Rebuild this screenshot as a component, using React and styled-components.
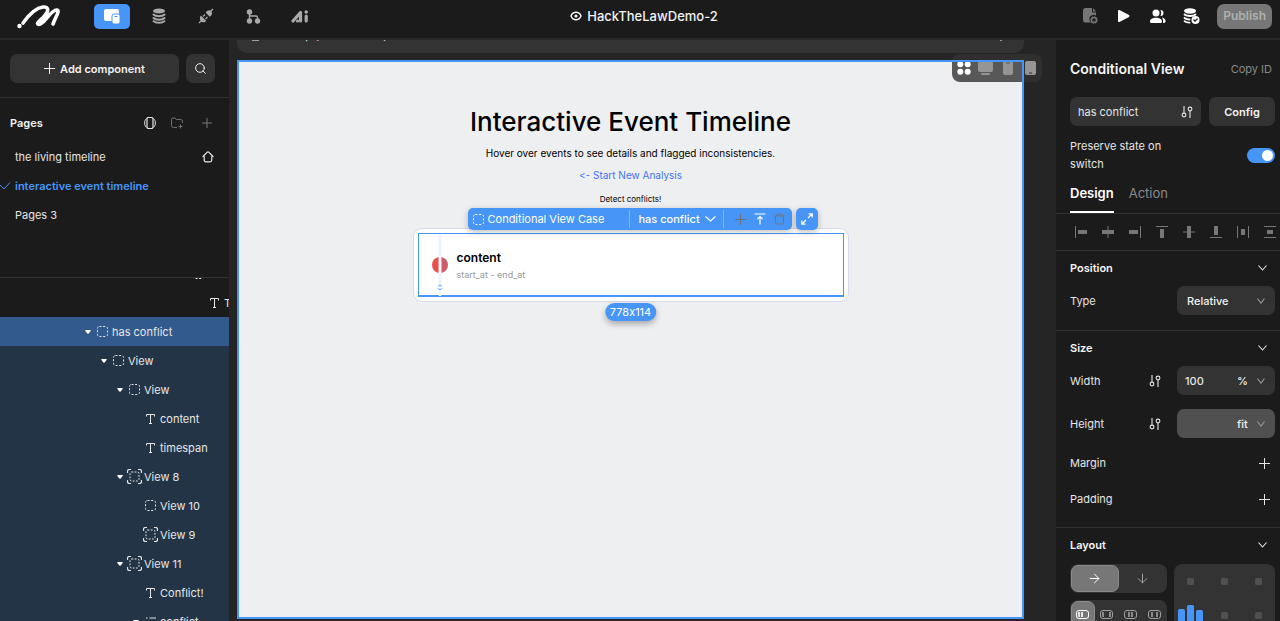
import React, { useLayoutEffect, useRef, useState } from 'react';
import styled, { createGlobalStyle } from 'styled-components';
import { FiPlus, FiSearch, FiArrowRight, FiArrowDown } from 'react-icons/fi';

const GlobalStyle = createGlobalStyle`
  * {
    box-sizing: border-box;
  }
  body {
    margin: 0;
    background: #1b1b1b;
    color: #e6e6e6;
    font-family: Inter, 'Liberation Sans', sans-serif;
    font-size: 11px;
    line-height: 18px;
    font-variant-ligatures: none;
    font-feature-settings: 'calt' 0;
  }
  button, input, select {
    font: inherit;
    color: inherit;
    border: 0;
    padding: 0;
    background: none;
    outline: none;
    appearance: none;
  }
  button {
    cursor: pointer;
  }
  svg {
    display: block;
    flex-shrink: 0;
  }
`;

const Page = styled.div`
  display: flex;
  flex-direction: column;
  height: 100vh;
  overflow: hidden;
`;

const TopBar = styled.header`
  display: flex;
  align-items: center;
  justify-content: space-between;
  flex-shrink: 0;
  height: 40px;
  padding: 0 8px 6px 16px;
  border-bottom: 2px solid #282828;
`;

const TopGroup = styled.nav`
  display: flex;
  align-items: center;
  flex: 1;
  gap: ${({ $gap }) => $gap || 0}px;
  justify-content: ${({ $end }) => ($end ? 'flex-end' : 'flex-start')};
`;

const Logo = styled.a`
  display: block;
  margin-right: 32px;
`;

const ToolButton = styled.button`
  display: flex;
  align-items: center;
  justify-content: center;
  width: 36px;
  height: 25px;
  margin-right: 11px;
  border-radius: 5px;
  color: ${({ $active }) => ($active ? '#fff' : '#a9a9a9')};
  background: ${({ $active }) => ($active ? '#4796f7' : 'transparent')};
`;

const ProjectName = styled.h1`
  display: flex;
  align-items: center;
  gap: 5px;
  margin: 0;
  color: #f2f2f2;
  font-size: 13px;
  font-weight: 500;
`;

const IconButton = styled.button`
  display: flex;
  align-items: center;
  justify-content: center;
  color: ${({ $color }) => $color || '#e6e6e6'};
`;

const PublishButton = styled.button`
  height: 25px;
  padding: 0 6px;
  border-radius: 7px;
  background: #777;
  color: #b0b0b0;
  font-size: 12px;
  font-weight: 600;
`;

const Body = styled.div`
  display: flex;
  flex: 1;
  min-height: 0;
`;

const Sidebar = styled.aside`
  display: flex;
  flex-direction: column;
  width: 229px;
  flex-shrink: 0;
`;

const AddRow = styled.div`
  display: flex;
  gap: 7px;
  padding: 14px 14px 14px 10px;
  border-bottom: 1px solid #303030;
`;

const GreyButton = styled.button`
  display: flex;
  align-items: center;
  justify-content: center;
  gap: 5px;
  height: 29px;
  flex: ${({ $grow }) => ($grow ? 1 : 'none')};
  width: ${({ $width }) => ($width ? `${$width}px` : 'auto')};
  border-radius: 7px;
  background: #333;
  color: #f2f2f2;
  font-weight: 600;
`;

const PagesPanel = styled.section`
  height: 180px;
  flex-shrink: 0;
  padding-top: 10px;
  border-bottom: 1px solid #333;
`;

const PagesHeader = styled.div`
  display: flex;
  align-items: center;
  gap: 15px;
  height: 29px;
  padding: 0 14px 0 10px;
  margin-bottom: 5px;
`;

const PagesTitle = styled.h2`
  flex: 1;
  margin: 0;
  color: #f2f2f2;
  font-size: 11px;
  font-weight: 600;
`;

const PageItem = styled.button`
  display: flex;
  align-items: center;
  justify-content: space-between;
  width: 100%;
  height: 29px;
  padding: 0 15px 0 0;
  text-align: left;
  color: ${({ $active }) => ($active ? '#4796f7' : '#e6e6e6')};
  font-weight: ${({ $active }) => ($active ? 600 : 400)};
`;

const PageLabel = styled.span`
  display: flex;
  align-items: center;
  flex: 1;
`;

const PageMark = styled.span`
  width: 15px;
`;

const Tree = styled.ul`
  flex: 1;
  min-height: 0;
  margin: 0;
  padding: 0;
  overflow: hidden;
  list-style: none;
`;

const TreeRow = styled.li`
  display: flex;
  align-items: center;
  height: 29px;
  padding-left: ${({ $depth }) => $depth * 16 + 5}px;
  overflow: hidden;
  white-space: nowrap;
  background: ${({ $state }) =>
    $state === 'selected' ? '#325a8c' : $state === 'inside' ? '#233446' : 'transparent'};
`;

const TreeArrow = styled.span`
  width: 9px;
  flex-shrink: 0;
`;

const TreeIcon = styled.span`
  display: flex;
  justify-content: center;
  width: 17px;
  flex-shrink: 0;
  margin-right: 1px;
`;

const Canvas = styled.main`
  position: relative;
  display: flex;
  flex-direction: column;
  flex: 1;
  min-width: 0;
  padding: 0 32px 2px 8px;
  background: #252525;
`;

const FrameBar = styled.div`
  height: 13px;
  flex-shrink: 0;
  overflow: hidden;
  border-radius: 0 0 10px 10px;
  background: #333;
`;

const FrameBarRow = styled.div`
  display: flex;
  align-items: center;
  gap: 9px;
  height: 33px;
  padding: 0 22px 4px 14px;
`;

const FrameName = styled.span`
  flex: 1;
`;

const Artboard = styled.div`
  position: relative;
  display: flex;
  flex-direction: column;
  align-items: center;
  flex: 1;
  margin-top: 7px;
  padding-top: 44px;
  background: #eeeff1;
  color: #000;
  &::after {
    content: '';
    position: absolute;
    inset: 0;
    border: 2px solid #4796f7;
    pointer-events: none;
  }
`;

const DeviceBar = styled.div`
  position: absolute;
  top: -6px;
  right: -18px;
  display: flex;
  align-items: center;
  gap: 7px;
  height: 28px;
  padding: 0 5px;
  border-radius: 8px;
  background: rgba(50, 50, 50, 0.8);
  color: #959595;
`;

const Title = styled.h2`
  margin: 0;
  font-size: 26px;
  font-weight: 500;
  line-height: 36px;
`;

const Subtitle = styled.p`
  margin: 4px 0;
  font-size: 10px;
`;

const BackLink = styled.a`
  color: #3e74f4;
  font-size: 10px;
  text-decoration: none;
`;

const Hint = styled.p`
  margin: 6px 0 20px;
  font-size: 8px;
`;

const Card = styled.div`
  position: relative;
  width: 56%;
  max-width: 436px;
  padding: 4px;
  border: 1px solid #d9d9ea;
  border-radius: 9px;
  background: #fff;
`;

const CaseView = styled.div`
  position: relative;
  display: flex;
  align-items: center;
  gap: 9px;
  height: 64px;
  padding-left: 13px;
  border: 1px solid #4796f7;
  border-bottom-width: 2px;
`;

const EventText = styled.div`
  display: flex;
  flex-direction: column;
  gap: 1px;
  padding-top: 3px;
`;

const EventTitle = styled.strong`
  font-size: 12px;
  font-weight: 600;
  line-height: 16px;
`;

const EventTime = styled.span`
  color: #999;
  font-size: 9px;
  line-height: 16px;
`;

const SelectionTools = styled.div`
  position: absolute;
  top: -21px;
  left: 54px;
  display: flex;
  gap: 4px;
  color: #fff;
  white-space: nowrap;
`;

const BlueBox = styled.div`
  display: flex;
  align-items: center;
  height: 22px;
  border-radius: 5px;
  background: #4796f7;
  box-shadow: 0 2px 6px rgba(0, 0, 0, 0.25);
`;

const BlueSegment = styled.div`
  display: flex;
  align-items: center;
  gap: ${({ $gap }) => $gap}px;
  width: ${({ $width }) => $width}px;
  height: 18px;
  padding-left: ${({ $pad }) => $pad}px;
  border-left: ${({ $divided }) => ($divided ? '1px solid #7fb6fa' : '0')};
`;

const CaseButton = styled.button`
  display: flex;
  align-items: center;
  gap: 5px;
  font-weight: 500;
`;

const ExpandButton = styled.button`
  display: flex;
  align-items: center;
  justify-content: center;
  width: 22px;
  height: 22px;
  border-radius: 5px;
  background: #4796f7;
  box-shadow: 0 2px 6px rgba(0, 0, 0, 0.25);
`;

const SizeBadge = styled.span`
  position: absolute;
  top: 100%;
  left: 50%;
  margin-top: 2px;
  padding: 0 5px;
  transform: translateX(-50%);
  border-radius: 9px;
  background: #4796f7;
  box-shadow: 0 3px 6px rgba(0, 0, 0, 0.3);
  color: #fff;
`;

const Inspector = styled.aside`
  width: 224px;
  flex-shrink: 0;
  overflow: hidden;
`;

const InspectorHead = styled.div`
  padding: 18px 5px 0 14px;
`;

const HeadRow = styled.div`
  display: flex;
  align-items: center;
  justify-content: space-between;
  gap: 8px;
  margin-bottom: ${({ $below }) => $below || 0}px;
`;

const InspectorTitle = styled.h2`
  margin: 0;
  color: #f5f5f5;
  font-size: 14px;
  font-weight: 600;
  line-height: 21px;
`;

const CopyButton = styled.button`
  padding-right: 3px;
  color: #8a8a8a;
`;

const Field = styled.div`
  display: flex;
  align-items: center;
  flex: ${({ $grow }) => ($grow ? 1 : 'none')};
  width: ${({ $grow }) => ($grow ? 'auto' : '98px')};
  min-width: 0;
  height: 29px;
  padding: 0 ${({ $grow }) => ($grow ? 8 : 10)}px 0 8px;
  border-radius: 7px;
  background: ${({ $light }) => ($light ? '#505050' : '#333')};
`;

const TextInput = styled.input`
  flex: 1;
  width: 100%;
  min-width: 0;
  font-weight: ${({ $strong }) => ($strong ? 500 : 400)};
`;

const Select = styled.select`
  flex: ${({ $grow }) => ($grow ? 1 : 'none')};
  margin-right: 9px;
  padding-left: ${({ $grow }) => ($grow ? 2 : 0)}px;
  color: #f2f2f2;
  font-weight: 500;
`;

const SwitchLabel = styled.label`
  display: flex;
  align-items: center;
  justify-content: space-between;
  height: 36px;
`;

const SwitchText = styled.span`
  width: 110px;
`;

const Switch = styled.input.attrs({ type: 'checkbox', role: 'switch' })`
  width: 28px;
  height: 15px;
  margin: 0;
  padding: 2px;
  border-radius: 8px;
  background: ${({ checked }) => (checked ? '#4796f7' : '#555')};
  &::before {
    content: '';
    display: block;
    width: 11px;
    height: 11px;
    margin-left: ${({ checked }) => (checked ? '13px' : '0')};
    border-radius: 50%;
    background: #fff;
  }
`;

const Tabs = styled.div`
  display: flex;
  gap: 15px;
  padding: 6px 14px 0;
  border-bottom: 1px solid #333;
`;

const Tab = styled.button`
  height: 34px;
  padding-bottom: 4px;
  border-bottom: 2px solid ${({ $active }) => ($active ? '#fff' : 'transparent')};
  color: ${({ $active }) => ($active ? '#fff' : '#8a8a8a')};
  font-size: 13px;
  font-weight: ${({ $active }) => ($active ? 600 : 400)};
`;

const AlignRow = styled.div`
  display: flex;
  align-items: center;
  justify-content: space-between;
  height: 37px;
  padding: 0 4px 0 19px;
  border-bottom: 1px solid #333;
`;

const Section = styled.section`
  padding: 6px 5px ${({ $bottom }) => $bottom || 0}px 14px;
  border-bottom: 1px solid #303030;
`;

const SectionHead = styled.div`
  display: flex;
  align-items: center;
  justify-content: space-between;
  height: 22px;
  padding-right: 8px;
`;

const SectionTitle = styled.h3`
  margin: 0;
  color: #f5f5f5;
  font-size: 11px;
  font-weight: 600;
`;

const PropRow = styled.div`
  display: flex;
  align-items: center;
  height: ${({ $height }) => $height}px;
`;

const PropLabel = styled.label`
  flex: 1;
`;

const PropIcon = styled.button`
  margin-right: 16px;
`;

const AddButton = styled.button`
  margin-right: 5px;
`;

const LayoutGrid = styled.div`
  display: flex;
  align-items: flex-start;
  gap: 7px;
  padding-top: 8px;
`;

const LayoutLeft = styled.div`
  display: flex;
  flex-direction: column;
  flex: 1;
  gap: 7px;
`;

const Segmented = styled.div`
  display: flex;
  height: 29px;
  padding: 1px;
  border-radius: 8px;
  background: #333;
`;

const Segment = styled.button`
  display: flex;
  align-items: center;
  justify-content: center;
  flex: 1;
  border: 1px solid ${({ $active }) => ($active ? '#8a8a8a' : 'transparent')};
  border-radius: 7px;
  color: ${({ $active }) => ($active ? '#fff' : '#a0a0a0')};
  background: ${({ $active }) => ($active ? '#777' : 'transparent')};
`;

const AlignGrid = styled.div`
  display: grid;
  grid-template-columns: repeat(3, 1fr);
  grid-auto-rows: 34px;
  width: 101px;
  border-radius: 8px;
  background: #333;
`;

const AlignCell = styled.button`
  display: flex;
  align-items: center;
  justify-content: center;
`;

const LogoIcon = () => (
  <svg width="46" height="27" viewBox="0 0 46 27" fill="none" stroke="#fff" strokeWidth="3.6" strokeLinecap="round" strokeLinejoin="round">
    <circle cx="3.500" cy="23" r="2.200" fill="#fff" stroke="none" />
    <path d="M7 20C12 13 19 5 27 4c5-.5 6 3 3 7-3 5-8 7-8.500 9.500C22 23 27 20 30 16c4-5 8-9.500 11-9 3 1-1 6-4 14" />
  </svg>
);

const PagesIcon = () => (
  <svg width="18" height="16" viewBox="0 0 18 16">
    <rect x="1" y="1" width="15" height="12" rx="2" fill="#fff" />
    <rect x="9" y="6" width="8" height="10" rx="2" fill="#fff" stroke="#4796f7" />
    <path d="M11.500 8.500h3" stroke="#4796f7" />
  </svg>
);

const DatabaseIcon = () => (
  <svg width="14" height="16" viewBox="0 0 14 16" fill="none" stroke="currentColor" strokeWidth="2" strokeLinecap="round">
    <ellipse cx="7" cy="3" rx="6" ry="2.500" fill="currentColor" stroke="none" />
    <path d="M1.500 6.500c2 2.200 9 2.200 11 0M1.500 10c2 2.200 9 2.200 11 0M1.500 13.200c2 2.200 9 2.200 11 0" />
  </svg>
);

const PlugIcon = () => (
  <svg width="16" height="16" viewBox="0 0 16 16" fill="currentColor">
    <path d="M1 15l3-3M12 4l3-3M5 8.500l2-2M7.500 11l2-2" stroke="currentColor" strokeWidth="1.300" />
    <path d="M7.800 4.800c1.200-2.600 4-3 5.400-1.900 1.500 1.600 1 4.600-1.500 5.800zM2.800 7.500l5.500 5.500c-1.800 1.800-4.300 1.500-5.300.3S1.300 9.300 2.800 7.500z" />
  </svg>
);

const FlowIcon = () => (
  <svg width="15" height="15" viewBox="0 0 15 15" fill="currentColor">
    <circle cx="3.500" cy="3" r="2.700" />
    <circle cx="3.500" cy="12" r="2.700" />
    <circle cx="11.500" cy="12" r="2.700" />
    <path d="M3.500 3v9M3.500 7h6.500q1.500 0 1.500 1.500V12" fill="none" stroke="currentColor" strokeWidth="1.300" />
  </svg>
);

const AiIcon = () => (
  <svg width="18" height="13" viewBox="0 0 18 13" fill="none" stroke="currentColor" strokeWidth="3.200" strokeLinecap="round" strokeLinejoin="round">
    <path d="M2 11L9.500 2.500V11M15.200 6.200V11" />
    <circle cx="6.500" cy="11" r="1.600" fill="currentColor" stroke="none" />
    <circle cx="15.200" cy="2" r="1.800" fill="currentColor" stroke="none" />
  </svg>
);

const EyeIcon = () => (
  <svg width="12" height="10" viewBox="0 0 12 10" fill="none" stroke="#f2f2f2" strokeWidth="1.500">
    <path d="M1 5c2-5 8-5 10 0-2 5-8 5-10 0z" />
    <circle cx="6" cy="5" r="1.600" fill="#f2f2f2" stroke="none" />
  </svg>
);

const FileGearIcon = () => (
  <svg width="15" height="16" viewBox="0 0 15 16">
    <path d="M2.500 0H9v3.500q0 1 1 1h3v3.200a4 4 0 0 0-5 6.800H2.500Q0 14.500 0 12V2.500Q0 0 2.500 0zM10 0l3 3.500h-3z" fill="currentColor" />
    <circle cx="11" cy="12" r="2.500" fill="none" stroke="currentColor" strokeWidth="1.500" />
    <circle cx="11" cy="12" r="3.500" fill="none" stroke="currentColor" strokeDasharray="1.200 1.500" />
  </svg>
);

const PlayIcon = () => (
  <svg width="17" height="14" viewBox="0 0 17 14" fill="#fff" stroke="#fff" strokeWidth="2" strokeLinejoin="round">
    <path d="M4 2l9.500 5L4 12z" />
  </svg>
);

const PeopleIcon = () => (
  <svg width="17" height="15" viewBox="0 0 17 15" fill="#fff">
    <circle cx="7" cy="4" r="3.500" />
    <path d="M1 12.500c0-5 12-5 12 0q0 1.500-1.500 1.500h-9Q1 14 1 12.500zM11.500 1a3 3 0 0 1 0 6q1.500-3 0-6zM13 8.500c3 .5 4 3 3.500 4.500q-.500 1-2.500 1 .800-3-1-5.500z" />
  </svg>
);

const DatabaseCheckIcon = () => (
  <svg width="17" height="16" viewBox="0 0 17 16" fill="none" stroke="#fff" strokeWidth="1.800" strokeLinecap="round">
    <ellipse cx="7" cy="3" rx="6" ry="2.700" fill="#fff" stroke="none" />
    <path d="M1.500 6.500c2 2 9 2 11 0M1.500 10c1 1 3 1.500 5 1.500M1.500 13.200c1 1 3 1.500 5 1.500" />
    <circle cx="12.500" cy="12" r="4" fill="#fff" stroke="none" />
    <path d="M10.800 12l1.200 1.200 2.200-2.200" stroke="#1b1b1b" strokeWidth="1.200" />
  </svg>
);

const VersionsIcon = () => (
  <svg width="12" height="12" viewBox="0 0 12 12" fill="none" stroke="currentColor">
    <rect x="3" y="0.500" width="6" height="11" rx="1.500" strokeWidth="1.200" />
    <path d="M2.500 1.500C0 3.500 0 8.500 2.500 10.500M9.500 1.500c2.500 2 2.500 7 0 9" />
  </svg>
);

const FolderPlusIcon = () => (
  <svg width="13" height="12" viewBox="0 0 13 12" fill="none" stroke="currentColor">
    <path d="M6 10.500H2.500q-2 0-2-2v-6q0-1.500 1.500-1.500h2l1.500 1.500h4q2 0 2 2V6M9.500 7.500v4M7.500 9.500h4" />
  </svg>
);

const HomeIcon = () => (
  <svg width="12" height="12" viewBox="0 0 12 12" fill="none" stroke="currentColor" strokeWidth="1.200" strokeLinecap="round" strokeLinejoin="round">
    <path d="M1 5.500L5 1.300q1-.8 2 0l4 4.200H9.800v3.500q0 1.800-1.800 1.800H4Q2.200 10.800 2.200 9V5.500z" />
  </svg>
);

const PlusIcon = ({ color = 'currentColor' }) => (
  <svg width="11" height="11" viewBox="0 0 11 11" fill="none" stroke={color}>
    <path d="M5.500 0v11M0 5.500h11" />
  </svg>
);

const Chevron = ({ width = 9, color = 'currentColor' }) => (
  <svg width={width} height="6" viewBox={`0 0 ${width} 6`} fill="none" stroke={color} strokeWidth="1.100">
    <path d={`M.5.5L${width / 2} 5 ${width - 0.5} .5`} />
  </svg>
);

const CheckIcon = () => (
  <svg width="11" height="8" viewBox="0 0 11 8" fill="none" stroke="#4796f7">
    <path d="M0 3l4 4 6-6.500" />
  </svg>
);

const CaretIcon = () => (
  <svg width="6" height="4" viewBox="0 0 6 4">
    <path d="M0.300 0h5.400Q6 1 3 4 0 1 .3 0z" fill="#fff" />
  </svg>
);

const ViewIcon = () => (
  <svg width="11" height="11" viewBox="0 0 11 11" fill="none" stroke="currentColor">
    <rect x="0.500" y="0.500" width="10" height="10" rx="2" strokeDasharray="2 1.600" />
  </svg>
);

const CaseIcon = () => (
  <svg width="15" height="15" viewBox="0 0 15 15" fill="none" stroke="currentColor">
    <rect x="3" y="3" width="9" height="9" rx="1.500" strokeDasharray="1.800 1.400" />
    <path d="M.5 4V2.500q0-2 2-2H4M11 .5h1.500q2 0 2 2V4M14.500 11v1.500q0 2-2 2H11M4 14.500H2.500q-2 0-2-2V11" strokeWidth="1.200" />
  </svg>
);

const TextIcon = () => (
  <svg width="9" height="10" viewBox="0 0 9 10" fill="none" stroke="currentColor">
    <path d="M.5 2.500V.5h8v2M4.500.5v9M3 9.500h3" />
  </svg>
);

const ListIcon = () => (
  <svg width="10" height="9" viewBox="0 0 10 9" fill="none" stroke="currentColor">
    <path d="M0 1h1.500M3.500 1H10M0 4.500h1.500M3.500 4.500H10M0 8h1.500M3.500 8H10" />
  </svg>
);

const BindIcon = () => (
  <svg width="12" height="12" viewBox="0 0 12 12" fill="none" stroke="currentColor" strokeWidth="1.100">
    <path d="M3 0v7M9 5v7" />
    <circle cx="3" cy="9" r="1.900" />
    <circle cx="9" cy="3" r="1.900" />
  </svg>
);

const MoveUpIcon = () => (
  <svg width="12" height="12" viewBox="0 0 12 12" fill="none" stroke="#fff" strokeWidth="1.200">
    <path d="M.5 1h11M6 11.500V4M3.500 6L6 3.500 8.500 6" />
  </svg>
);

const TrashIcon = () => (
  <svg width="11" height="12" viewBox="0 0 11 12" fill="none" stroke="#6c7682">
    <path d="M0 3h11M3 3V1h5v2M1.500 3v6.500q0 1.500 1.500 1.500h5q1.500 0 1.500-1.500V3" />
  </svg>
);

const ExpandIcon = () => (
  <svg width="12" height="12" viewBox="0 0 12 12" fill="none" stroke="#fff" strokeWidth="1.200">
    <path d="M7 5l4-4M7.500 .800h3.700V4.500M5 7l-4 4M.800 7.500v3.700h3.700" />
  </svg>
);

const EventDot = () => (
  <svg width="16" height="62" viewBox="0 0 16 62">
    <path d="M8 23a8 8 0 0 0 0 16z" fill="#e9504b" />
    <path d="M8 23a8 8 0 0 1 0 16z" fill="#cc5b6b" />
    <rect x="6.500" width="3" height="62" fill="#edf4fe" />
    <path d="M6.200 52.500l1-1.200h1.600l1 1.200M6.200 54.300l1 1.200h1.600l1-1.200" fill="none" stroke="#4796f7" />
  </svg>
);

const DevicesIcon = () => (
  <>
    <svg width="14" height="14" viewBox="0 0 14 14" fill="#fff">
      <circle cx="3.300" cy="3.300" r="3" />
      <circle cx="10.700" cy="3.300" r="3" />
      <circle cx="3.300" cy="10.700" r="3" />
      <circle cx="10.700" cy="10.700" r="3" />
    </svg>
    <svg width="15" height="14" viewBox="0 0 15 14" fill="currentColor">
      <rect width="15" height="11" rx="2" />
      <rect x="3" y="12" width="9" height="2" rx="1" />
    </svg>
    <svg width="15" height="14" viewBox="0 0 15 14">
      <rect x="3" width="10" height="14" rx="2" fill="currentColor" />
      <path d="M6 2h4" stroke="#555" />
    </svg>
    <svg width="15" height="14" viewBox="0 0 15 14">
      <rect x="3" width="11" height="14" rx="2" fill="currentColor" />
      <path d="M7 12h3" stroke="#333" />
    </svg>
  </>
);

const AlignIcon = ({ d, block, turn }) => (
  <svg width="12" height="12" viewBox="0 0 12 12" fill="none" stroke="#777">
    <g transform={turn ? 'rotate(90 6 6)' : undefined}>
      <path d={d} />
      <path d={block} strokeWidth="4" />
    </g>
  </svg>
);

const SpreadIcon = ({ bars }) => (
  <svg width="13" height="9" viewBox="0 0 13 9" fill="none" stroke="currentColor">
    <rect x="0.500" y="0.500" width="12" height="8" rx="2.500" />
    {bars.map((x) => (
      <path key={x} d={`M${x} 2v5`} strokeWidth="1.600" />
    ))}
  </svg>
);

const BarsIcon = () => (
  <svg width="26" height="20" viewBox="0 0 26 20" fill="#4796f7">
    <rect y="4" width="7" height="16" rx="1.500" />
    <rect x="9" width="7" height="20" rx="1.500" />
    <rect x="18" y="5" width="7" height="12" rx="1.500" />
  </svg>
);

const CellDot = () => (
  <svg width="7" height="7" viewBox="0 0 7 7">
    <rect width="7" height="7" rx="1.500" fill="#505050" />
  </svg>
);

const pages = ['the living timeline', 'interactive event timeline', 'Pages 3'];

const layers = [
  { name: 'Timeline', depth: 11, icon: 'view' },
  { name: 'Title', depth: 12, icon: 'text' },
  { name: 'has conflict', depth: 5, icon: 'view', open: true, state: 'selected' },
  { name: 'View', depth: 6, icon: 'view', open: true, state: 'inside' },
  { name: 'View', depth: 7, icon: 'view', open: true, state: 'inside' },
  { name: 'content', depth: 8, icon: 'text', state: 'inside' },
  { name: 'timespan', depth: 8, icon: 'text', state: 'inside' },
  { name: 'View 8', depth: 7, icon: 'case', open: true, state: 'inside' },
  { name: 'View 10', depth: 8, icon: 'view', state: 'inside' },
  { name: 'View 9', depth: 8, icon: 'case', state: 'inside' },
  { name: 'View 11', depth: 7, icon: 'case', open: true, state: 'inside' },
  { name: 'Conflict!', depth: 8, icon: 'text', state: 'inside' },
  { name: 'conflict', depth: 8, icon: 'list', open: true, state: 'inside' },
];

const layerIcons = { view: ViewIcon, text: TextIcon, case: CaseIcon, list: ListIcon };

const alignments = [
  { label: 'Align left', d: 'M.5 0v12', block: 'M3 6h9' },
  { label: 'Align center', d: 'M6 0v12', block: 'M0 6h12' },
  { label: 'Align right', d: 'M11.500 0v12', block: 'M0 6h9' },
  { label: 'Align top', d: 'M.5 0v12', block: 'M3 6h9', turn: true },
  { label: 'Align middle', d: 'M6 0v12', block: 'M0 6h12', turn: true },
  { label: 'Align bottom', d: 'M11.500 0v12', block: 'M0 6h9', turn: true },
  { label: 'Distribute horizontally', d: 'M.5 0v12M11.500 0v12', block: 'M6 3v6' },
  { label: 'Distribute vertically', d: 'M.5 0v12M11.500 0v12', block: 'M6 3v6', turn: true },
];

const spreads = [
  { label: 'Start', bars: [3, 6] },
  { label: 'Between', bars: [3, 10] },
  { label: 'Around', bars: [5, 8] },
  { label: 'Evenly', bars: [4, 9] },
];

const Header = () => (
  <TopBar>
    <TopGroup>
      <Logo href="#" aria-label="Home"><LogoIcon /></Logo>
      <ToolButton $active aria-label="Pages"><PagesIcon /></ToolButton>
      <ToolButton aria-label="Database"><DatabaseIcon /></ToolButton>
      <ToolButton aria-label="Integrations"><PlugIcon /></ToolButton>
      <ToolButton aria-label="Workflows"><FlowIcon /></ToolButton>
      <ToolButton aria-label="AI"><AiIcon /></ToolButton>
    </TopGroup>
    <ProjectName><EyeIcon />HackTheLawDemo-2</ProjectName>
    <TopGroup $end $gap={17}>
      <IconButton $color="#777" aria-label="Page settings"><FileGearIcon /></IconButton>
      <IconButton aria-label="Preview"><PlayIcon /></IconButton>
      <IconButton aria-label="Members"><PeopleIcon /></IconButton>
      <IconButton aria-label="Sync backend"><DatabaseCheckIcon /></IconButton>
      <PublishButton>Publish</PublishButton>
    </TopGroup>
  </TopBar>
);

const LeftPanel = () => {
  const [activePage, setActivePage] = useState('interactive event timeline');
  const treeRef = useRef(null);

  useLayoutEffect(() => {
    treeRef.current.scrollTop = 19;
  }, []);

  return (
    <Sidebar>
      <AddRow>
        <GreyButton $grow><PlusIcon />Add component</GreyButton>
        <GreyButton $width={29} aria-label="Search"><FiSearch size={13} strokeWidth={1.8} /></GreyButton>
      </AddRow>
      <PagesPanel>
        <PagesHeader>
          <PagesTitle>Pages</PagesTitle>
          <IconButton aria-label="Versions"><VersionsIcon /></IconButton>
          <IconButton $color="#707070" aria-label="New folder"><FolderPlusIcon /></IconButton>
          <IconButton $color="#808080" aria-label="New page"><FiPlus size={16} strokeWidth={1.4} /></IconButton>
        </PagesHeader>
        {pages.map((page, i) => (
          <PageItem key={page} $active={page === activePage} onClick={() => setActivePage(page)}>
            <PageLabel>
              <PageMark>{page === activePage && <CheckIcon />}</PageMark>
              {page}
            </PageLabel>
            {i === 0 && <HomeIcon />}
          </PageItem>
        ))}
      </PagesPanel>
      <Tree ref={treeRef}>
        {layers.map((layer, i) => {
          const LayerIcon = layerIcons[layer.icon];
          return (
            <TreeRow key={i} $depth={layer.depth} $state={layer.state}>
              <TreeArrow>{layer.open && <CaretIcon />}</TreeArrow>
              <TreeIcon><LayerIcon /></TreeIcon>
              {layer.name}
            </TreeRow>
          );
        })}
      </Tree>
    </Sidebar>
  );
};

const CanvasArea = () => {
  const barRef = useRef(null);

  useLayoutEffect(() => {
    barRef.current.scrollTop = 20;
  }, []);

  return (
    <Canvas>
      <FrameBar ref={barRef}>
        <FrameBarRow>
          <svg width="9" height="13" viewBox="0 0 9 13" fill="#a0a0a0">
            <rect x="0" width="9" height="8" rx="1" />
            <rect x="1" y="11" width="7" height="2" />
          </svg>
          <FrameName>Desktop (1440 × 1024)</FrameName>
          <svg width="2" height="13" viewBox="0 0 2 13" fill="#c0c0c0">
            <circle cx="1" cy="1" r="1" />
            <circle cx="1" cy="6.500" r="1" />
            <circle cx="1" cy="12" r="1" />
          </svg>
        </FrameBarRow>
      </FrameBar>
      <Artboard>
        <DeviceBar><DevicesIcon /></DeviceBar>
        <Title>Interactive Event Timeline</Title>
        <Subtitle>Hover over events to see details and flagged inconsistencies.</Subtitle>
        <BackLink href="#">&lt;- Start New Analysis</BackLink>
        <Hint>Detect conflicts!</Hint>
        <Card>
          <CaseView>
            <EventDot />
            <EventText>
              <EventTitle>content</EventTitle>
              <EventTime>start_at - end_at</EventTime>
            </EventText>
          </CaseView>
          <SelectionTools>
            <BlueBox>
              <BlueSegment $gap={4} $width={161} $pad={5}><ViewIcon />Conditional View Case</BlueSegment>
              <BlueSegment $divided $width={94} $pad={9}>
                <CaseButton>has conflict<Chevron width={11} /></CaseButton>
              </BlueSegment>
              <BlueSegment $divided $gap={8} $width={69} $pad={11}>
                <IconButton aria-label="Add"><PlusIcon color="#6f7275" /></IconButton>
                <IconButton aria-label="Select parent"><MoveUpIcon /></IconButton>
                <IconButton aria-label="Delete"><TrashIcon /></IconButton>
              </BlueSegment>
            </BlueBox>
            <ExpandButton aria-label="Expand"><ExpandIcon /></ExpandButton>
          </SelectionTools>
          <SizeBadge>778x114</SizeBadge>
        </Card>
      </Artboard>
    </Canvas>
  );
};

const RightPanel = () => {
  const [preserve, setPreserve] = useState(true);
  const [tab, setTab] = useState('Design');

  return (
    <Inspector>
      <InspectorHead>
        <HeadRow $below={18}>
          <InspectorTitle>Conditional View</InspectorTitle>
          <CopyButton>Copy ID</CopyButton>
        </HeadRow>
        <HeadRow $below={11}>
          <Field $grow>
            <TextInput aria-label="Case name" defaultValue="has conflict" />
            <BindIcon />
          </Field>
          <GreyButton $width={66}>Config</GreyButton>
        </HeadRow>
        <SwitchLabel>
          <SwitchText>Preserve state on switch</SwitchText>
          <Switch checked={preserve} onChange={() => setPreserve(!preserve)} />
        </SwitchLabel>
      </InspectorHead>
      <Tabs>
        {['Design', 'Action'].map((name) => (
          <Tab key={name} $active={name === tab} onClick={() => setTab(name)}>{name}</Tab>
        ))}
      </Tabs>
      <AlignRow>
        {alignments.map(({ label, ...icon }) => (
          <IconButton key={label} aria-label={label}><AlignIcon {...icon} /></IconButton>
        ))}
      </AlignRow>
      <Section $bottom={8}>
        <SectionHead><SectionTitle>Position</SectionTitle><Chevron /></SectionHead>
        <PropRow $height={43}>
          <PropLabel htmlFor="type">Type</PropLabel>
          <Field>
            <Select id="type" $grow><option>Relative</option></Select>
            <Chevron width={8} color="#999" />
          </Field>
        </PropRow>
      </Section>
      <Section $bottom={10}>
        <SectionHead><SectionTitle>Size</SectionTitle><Chevron /></SectionHead>
        <PropRow $height={43}>
          <PropLabel htmlFor="width">Width</PropLabel>
          <PropIcon aria-label="Bind width"><BindIcon /></PropIcon>
          <Field>
            <TextInput id="width" $strong defaultValue="100" />
            <Select aria-label="Width unit"><option>%</option></Select>
            <Chevron width={8} color="#999" />
          </Field>
        </PropRow>
        <PropRow $height={43}>
          <PropLabel htmlFor="height">Height</PropLabel>
          <PropIcon aria-label="Bind height"><BindIcon /></PropIcon>
          <Field $light>
            <TextInput id="height" $strong />
            <Select aria-label="Height unit"><option>fit</option></Select>
            <Chevron width={8} color="#999" />
          </Field>
        </PropRow>
        {['Margin', 'Padding'].map((name) => (
          <PropRow key={name} $height={36}>
            <PropLabel as="span">{name}</PropLabel>
            <AddButton aria-label={`Add ${name}`}><PlusIcon /></AddButton>
          </PropRow>
        ))}
      </Section>
      <Section>
        <SectionHead><SectionTitle>Layout</SectionTitle><Chevron /></SectionHead>
        <LayoutGrid>
          <LayoutLeft>
            <Segmented>
              <Segment $active aria-label="Horizontal"><FiArrowRight size={15} strokeWidth={1.600} /></Segment>
              <Segment aria-label="Vertical"><FiArrowDown size={15} strokeWidth={1.600} /></Segment>
            </Segmented>
            <Segmented>
              {spreads.map(({ label, bars }, i) => (
                <Segment key={label} $active={i === 0} aria-label={label}><SpreadIcon bars={bars} /></Segment>
              ))}
            </Segmented>
          </LayoutLeft>
          <AlignGrid>
            {[0, 1, 2, 3, 4, 5, 6, 7, 8].map((cell) => (
              <AlignCell key={cell} aria-label={`Cell ${cell + 1}`}>
                {cell === 3 ? <BarsIcon /> : <CellDot />}
              </AlignCell>
            ))}
          </AlignGrid>
        </LayoutGrid>
      </Section>
    </Inspector>
  );
};

const App = () => (
  <Page>
    <GlobalStyle />
    <Header />
    <Body>
      <LeftPanel />
      <CanvasArea />
      <RightPanel />
    </Body>
  </Page>
);

export default App;
